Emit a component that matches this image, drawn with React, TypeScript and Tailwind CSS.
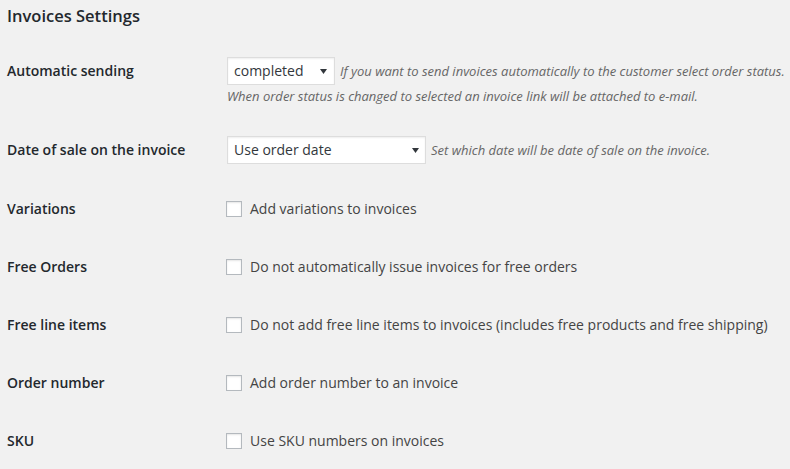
import React from "react";

function Arrow() {
  return (
    <svg width="7" height="5" viewBox="0 0 7 5" className="shrink-0">
      <path d="M0 0 L7 0 L3.5 5 Z" fill="#32373c" />
    </svg>
  );
}

function FakeSelect({ value, width, pr }: { value: string; width: string; pr: string }) {
  return (
    <div
      className={`flex h-[28px] shrink-0 items-center justify-between border border-[#ddd] bg-white pl-[6px] text-[14px] leading-[18px] text-[#32373c] shadow-[inset_0_1px_2px_rgba(0,0,0,0.07)] ${width} ${pr}`}
    >
      <span>{value}</span>
      <Arrow />
    </div>
  );
}

function CheckRow({ label, text }: { label: string; text: string }) {
  return (
    <div className="flex h-[58px]">
      <div className="w-[220px] shrink-0 pt-[20px] text-[14px] font-semibold leading-[18px] text-[#23282d]">
        {label}
      </div>
      <div className="-ml-px flex items-center">
        <span className="mr-[8px] h-4 w-4 shrink-0 border border-[#b4b9be] bg-white shadow-[inset_0_1px_2px_rgba(0,0,0,0.1)]" />
        <span className="text-[14px] leading-[18px] text-[#444]">{text}</span>
      </div>
    </div>
  );
}

export default function App() {
  return (
    <div className="min-h-[469px] w-full overflow-hidden bg-[#f1f1f1] pl-[7px] font-['Open_Sans',sans-serif]">
      <h2 className="pt-[5px] text-[16.5px] font-semibold leading-[22px] text-[#23282d]">
        Invoices Settings
      </h2>
      <div className="mt-[15px]">
        <div className="flex">
          <div className="w-[220px] shrink-0 pt-[20px] text-[14px] font-semibold leading-[18px] text-[#23282d]">
            Automatic sending
          </div>
          <div className="pt-[15px] pb-[16px]">
            <div className="flex items-center">
              <FakeSelect value="completed" width="w-[108px]" pr="pr-[7px]" />
              <span className="ml-[5px] whitespace-nowrap text-[13px] italic leading-[18px] text-[#666]">
                If you want to send invoices automatically to the customer select order status.
              </span>
            </div>
            <div className="mt-[2px] whitespace-nowrap text-[13px] italic leading-[18px] text-[#666]">
              When order status is changed to selected an invoice link will be attached to e-mail.
            </div>
          </div>
        </div>
        <div className="flex">
          <div className="w-[220px] shrink-0 pt-[20px] text-[14px] font-semibold leading-[18px] text-[#23282d]">
            Date of sale on the invoice
          </div>
          <div className="pt-[15px] pb-[16px]">
            <div className="flex items-center">
              <FakeSelect value="Use order date" width="w-[199px]" pr="pr-[6px]" />
              <span className="ml-[5px] whitespace-nowrap text-[13px] italic leading-[18px] text-[#666]">
                Set which date will be date of sale on the invoice.
              </span>
            </div>
          </div>
        </div>
        <CheckRow label="Variations" text="Add variations to invoices" />
        <CheckRow label="Free Orders" text="Do not automatically issue invoices for free orders" />
        <CheckRow
          label="Free line items"
          text="Do not add free line items to invoices (includes free products and free shipping)"
        />
        <CheckRow label="Order number" text="Add order number to an invoice" />
        <CheckRow label="SKU" text="Use SKU numbers on invoices" />
      </div>
    </div>
  );
}
